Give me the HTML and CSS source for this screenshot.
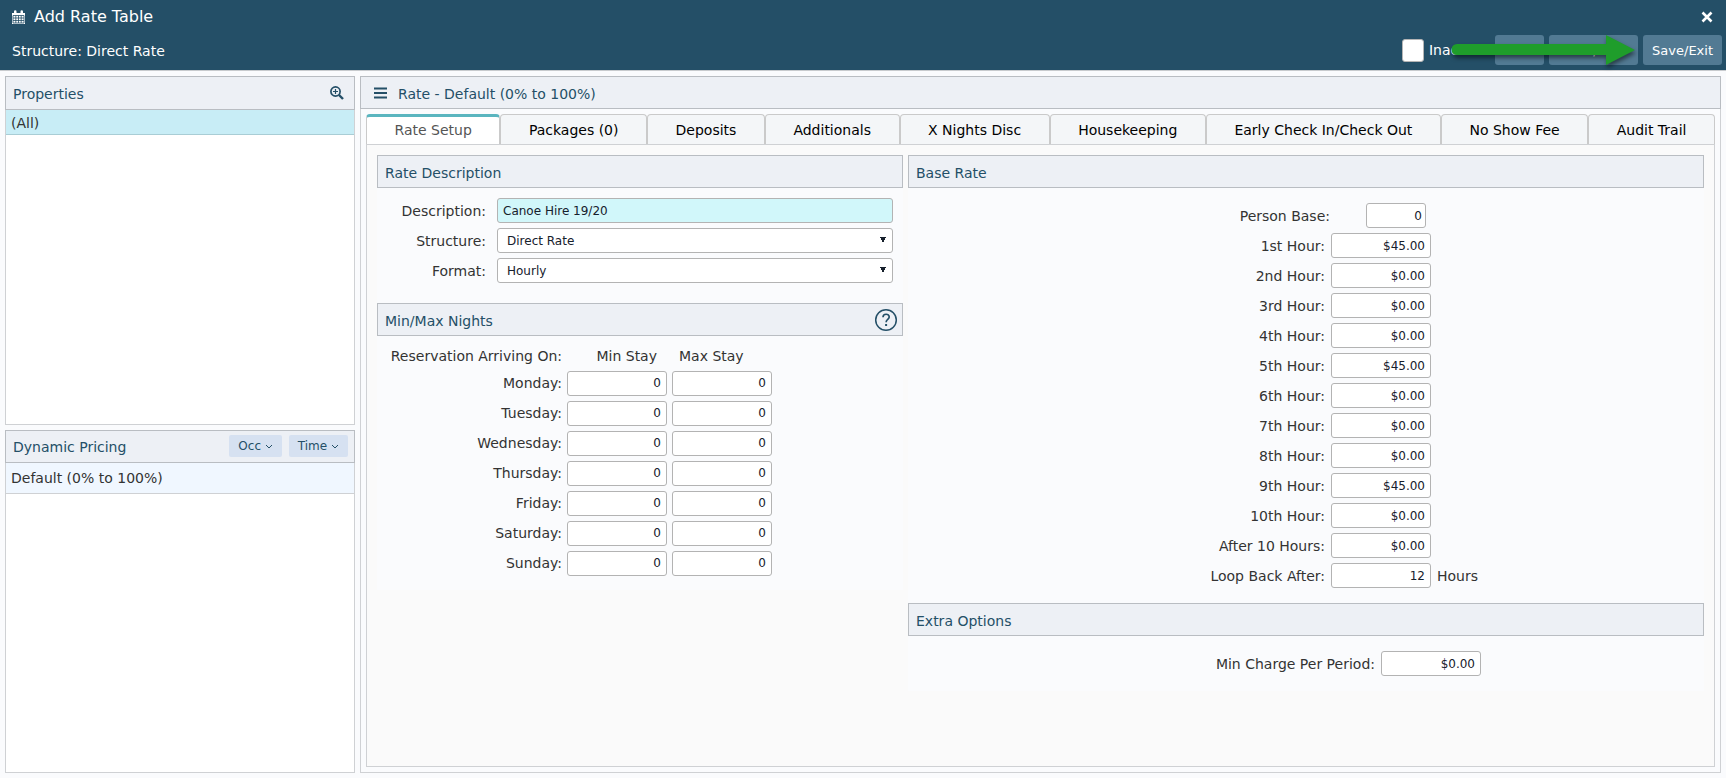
FILE: index.html
```
<!DOCTYPE html>
<html lang="en">
<head>
    <meta charset="UTF-8">
    <meta name="viewport" content="width=device-width, initial-scale=1.0">
    <title>Add Rate Table</title>
    <link rel="stylesheet" href="styles.css">
</head>
<body>

<!-- Top Bar -->
<header class="top-bar">
    <div class="title-row">
        <svg class="icon-calendar" viewBox="0 0 13 14">
            <path d="M0 3h2V1.500a1 1 0 0 1 2.500 0V3h4V1.500a1 1 0 0 1 2.500 0V3h2v11H0z" fill="#fff"/>
            <path d="M1 5.500h11v7.500H1zM1 8h11M1 10.500h11M3.800 5.500v7.500M6.500 5.500v7.500M9.200 5.500v7.500" fill="none" stroke="#244f67" stroke-width="0.800"/>
        </svg>
        <h1>Add Rate Table</h1>
        <button class="close-btn" aria-label="Close">
            <svg viewBox="0 0 12 12"><path d="M1.500 1.500l9 9M10.500 1.500l-9 9" stroke="#fff" stroke-width="2.600"/></svg>
        </button>
    </div>
    <div class="action-row">
        <span class="structure-text">Structure: Direct Rate</span>
        <div class="actions">
            <input type="checkbox" id="inactive" class="check">
            <label for="inactive">Inactive</label>
            <button class="top-btn btn-save">Save</button>
            <button class="top-btn btn-new">Save/New</button>
            <button class="top-btn">Save/Exit</button>
            <svg class="arrow" viewBox="0 0 190 40">
                <path d="M11 9h149V0l29 15-29 15V20H11a5.500 5.500 0 0 1 0-11z" fill="#1f9d2b"/>
            </svg>
        </div>
    </div>
</header>

<div class="layout">
    <!-- Left Side -->
    <aside class="side">
        <section class="panel properties">
            <div class="panel-header">
                <h2>Properties</h2>
                <button class="icon-btn" aria-label="Search">
                    <svg class="icon-search" viewBox="0 0 14 14" fill="none" stroke="#244f67">
                        <circle cx="5.500" cy="5.500" r="4.600" stroke-width="1.700"/>
                        <path d="M9 9l4 4" stroke-width="2.400"/>
                        <path d="M3 5.500h5M5.500 3v5" stroke-width="1.200"/>
                    </svg>
                </button>
            </div>
            <div class="list-row selected">(All)</div>
        </section>

        <section class="panel pricing">
            <div class="panel-header">
                <h2>Dynamic Pricing</h2>
                <button class="small-btn">Occ <svg viewBox="0 0 8 5"><path d="M1 1l3 3 3-3" fill="none" stroke="#244f67"/></svg></button>
                <button class="small-btn">Time <svg viewBox="0 0 8 5"><path d="M1 1l3 3 3-3" fill="none" stroke="#244f67"/></svg></button>
            </div>
            <div class="list-row current">Default (0% to 100%)</div>
        </section>
    </aside>

    <!-- Rate Panel -->
    <main class="panel rate-panel">
        <div class="panel-header rate-header">
            <svg class="icon-menu" viewBox="0 0 13 12"><path d="M0 1.500h13M0 6h13M0 10.500h13" stroke="#244f67" stroke-width="2"/></svg>
            <h2>Rate - Default (0% to 100%)</h2>
        </div>

        <div class="tab-box">
            <nav class="tabs">
                <button class="tab active">Rate Setup</button>
                <button class="tab">Packages (0)</button>
                <button class="tab">Deposits</button>
                <button class="tab">Additionals</button>
                <button class="tab">X Nights Disc</button>
                <button class="tab">Housekeeping</button>
                <button class="tab">Early Check In/Check Out</button>
                <button class="tab">No Show Fee</button>
                <button class="tab">Audit Trail</button>
            </nav>

            <div class="tab-content">
                <div class="col-left">
                    <section class="group">
                        <div class="group-header"><h3>Rate Description</h3></div>
                        <div class="form description-form">
                            <label for="description">Description:</label>
                            <input type="text" id="description" class="field highlight" value="Canoe Hire 19/20">
                            <label for="structure">Structure:</label>
                            <select id="structure" class="field"><option>Direct Rate</option></select>
                            <label for="format">Format:</label>
                            <select id="format" class="field"><option>Hourly</option></select>
                        </div>
                    </section>

                    <section class="group">
                        <div class="group-header">
                            <h3>Min/Max Nights</h3>
                            <button class="help-btn" aria-label="Help">
                                <svg viewBox="0 0 24 24" fill="none" stroke="#244f67">
                                    <circle cx="12" cy="12" r="10.300" stroke-width="1.500"/>
                                    <path d="M9 9.300c0-4 6.200-4 6.200-.3 0 2.500-3.100 2.300-3.100 5.200" stroke-width="1.700"/>
                                    <path d="M12.100 16v2" stroke-width="2"/>
                                </svg>
                            </button>
                        </div>
                        <table class="nights-table">
                            <thead>
                                <tr><th>Reservation Arriving On:</th><th class="min-head">Min Stay</th><th class="max-head">Max Stay</th></tr>
                            </thead>
                            <tbody>
                                <tr><th>Monday:</th><td><input type="text" class="field num" aria-label="Monday min stay" value="0"></td><td><input type="text" class="field num" aria-label="Monday max stay" value="0"></td></tr>
                                <tr><th>Tuesday:</th><td><input type="text" class="field num" aria-label="Tuesday min stay" value="0"></td><td><input type="text" class="field num" aria-label="Tuesday max stay" value="0"></td></tr>
                                <tr><th>Wednesday:</th><td><input type="text" class="field num" aria-label="Wednesday min stay" value="0"></td><td><input type="text" class="field num" aria-label="Wednesday max stay" value="0"></td></tr>
                                <tr><th>Thursday:</th><td><input type="text" class="field num" aria-label="Thursday min stay" value="0"></td><td><input type="text" class="field num" aria-label="Thursday max stay" value="0"></td></tr>
                                <tr><th>Friday:</th><td><input type="text" class="field num" aria-label="Friday min stay" value="0"></td><td><input type="text" class="field num" aria-label="Friday max stay" value="0"></td></tr>
                                <tr><th>Saturday:</th><td><input type="text" class="field num" aria-label="Saturday min stay" value="0"></td><td><input type="text" class="field num" aria-label="Saturday max stay" value="0"></td></tr>
                                <tr><th>Sunday:</th><td><input type="text" class="field num" aria-label="Sunday min stay" value="0"></td><td><input type="text" class="field num" aria-label="Sunday max stay" value="0"></td></tr>
                            </tbody>
                        </table>
                    </section>
                </div>

                <div class="col-right">
                    <section class="group">
                        <div class="group-header"><h3>Base Rate</h3></div>
                        <div class="form rate-form">
                            <div class="rate-row person-row"><label for="person">Person Base:</label><input type="text" id="person" class="field num" value="0"></div>
                            <div class="rate-row"><label for="h1">1st Hour:</label><input type="text" id="h1" class="field num" value="$45.00"></div>
                            <div class="rate-row"><label for="h2">2nd Hour:</label><input type="text" id="h2" class="field num" value="$0.00"></div>
                            <div class="rate-row"><label for="h3">3rd Hour:</label><input type="text" id="h3" class="field num" value="$0.00"></div>
                            <div class="rate-row"><label for="h4">4th Hour:</label><input type="text" id="h4" class="field num" value="$0.00"></div>
                            <div class="rate-row"><label for="h5">5th Hour:</label><input type="text" id="h5" class="field num" value="$45.00"></div>
                            <div class="rate-row"><label for="h6">6th Hour:</label><input type="text" id="h6" class="field num" value="$0.00"></div>
                            <div class="rate-row"><label for="h7">7th Hour:</label><input type="text" id="h7" class="field num" value="$0.00"></div>
                            <div class="rate-row"><label for="h8">8th Hour:</label><input type="text" id="h8" class="field num" value="$0.00"></div>
                            <div class="rate-row"><label for="h9">9th Hour:</label><input type="text" id="h9" class="field num" value="$45.00"></div>
                            <div class="rate-row"><label for="h10">10th Hour:</label><input type="text" id="h10" class="field num" value="$0.00"></div>
                            <div class="rate-row"><label for="after">After 10 Hours:</label><input type="text" id="after" class="field num" value="$0.00"></div>
                            <div class="rate-row"><label for="loop">Loop Back After:</label><input type="text" id="loop" class="field num" value="12"><span>Hours</span></div>
                        </div>
                    </section>

                    <section class="group">
                        <div class="group-header"><h3>Extra Options</h3></div>
                        <div class="form rate-form extra-form">
                            <div class="rate-row"><label for="charge">Min Charge Per Period:</label><input type="text" id="charge" class="field num" value="$0.00"></div>
                        </div>
                    </section>
                </div>
            </div>
        </div>
    </main>
</div>

</body>
</html>
```
FILE: styles.css
```
* {
    box-sizing: border-box;
}
body {
    margin: 0;
    min-height: 100vh;
    display: flex;
    flex-direction: column;
    background-color: #fafbfd;
    color: #333;
    font-family: Verdana, "DejaVu Sans", sans-serif;
    font-size: 14px;
    line-height: 18px;
}
h1, h2, h3 {
    margin: 0;
    font-weight: normal;
}
button, input, select {
    font-family: inherit;
    margin: 0;
}
button {
    cursor: pointer;
}

/* top bar */
.top-bar {
    background-color: #244f67;
    border-bottom: 1px solid #c8cbce;
    color: white;
    padding: 0 4px 5px 12px;
}
.title-row {
    display: flex;
    align-items: center;
    height: 33px;
    margin-bottom: 2px;
}
.icon-calendar {
    width: 13px;
    height: 14px;
    margin-right: 9px;
}
h1 {
    font-size: 16px;
    flex: 1;
}
.close-btn {
    background: none;
    border: none;
    padding: 0;
    margin-right: 9px;
    height: 12px;
}
.close-btn svg {
    width: 12px;
    height: 12px;
    display: block;
}
.action-row {
    display: flex;
    align-items: center;
    justify-content: space-between;
}
.structure-text {
    padding-top: 2px;
}
.actions {
    position: relative;
    display: flex;
    align-items: center;
    gap: 5px;
}
.check {
    appearance: none;
    width: 22px;
    height: 23px;
    background-color: white;
    border: 1px solid #b5b5b5;
    border-radius: 3px;
}
.top-btn {
    height: 30px;
    padding: 0 9px;
    background-color: #527a93;
    color: white;
    border: none;
    border-radius: 3px;
    font-size: 13px;
}
.btn-save {
    margin-left: 5px;
}
.btn-new {
    padding: 0 12px;
}
.arrow {
    position: absolute;
    top: 0;
    right: 86px;
    width: 190px;
    height: 40px;
    filter: drop-shadow(1px 3px 2px rgba(0, 0, 0, 0.5));
}

/* panels */
.layout {
    flex: 1;
    display: flex;
    gap: 5px;
    padding: 5px;
}
.side {
    width: 350px;
    display: flex;
    flex-direction: column;
    gap: 5px;
}
.panel {
    border: 1px solid #cfd1d4;
    background-color: white;
}
.properties {
    flex: 349;
}
.pricing {
    flex: 343;
}
.panel-header,
.group-header {
    display: flex;
    align-items: center;
    height: 33px;
    padding: 0 7px;
    background-color: #edf0f5;
    border: 1px solid #b9bdc2;
    color: #244f67;
}
.panel-header {
    margin: -1px -1px 0;
}
.properties .panel-header {
    height: 34px;
}
h2, h3 {
    font-size: 14px;
    flex: 1;
    padding-top: 2px;
}
.icon-btn,
.help-btn {
    background: none;
    border: none;
    padding: 0;
}
.icon-btn svg {
    display: block;
    width: 14px;
    height: 14px;
    margin-right: 3px;
}
.help-btn svg {
    display: block;
    width: 24px;
    height: 24px;
}
.group-header {
    padding-right: 4px;
}
.list-row {
    height: 25px;
    padding: 4px 5px;
    border-bottom: 1px solid #cfd1d4;
}
.selected {
    background-color: #c8edf6;
    border-color: #a9cdd5;
}
.current {
    height: 31px;
    padding-top: 6px;
    background-color: #f0f7ff;
}
.small-btn {
    height: 22px;
    margin-left: 7px;
    padding: 0 9px;
    background-color: #d6e1f1;
    border: none;
    border-radius: 2px;
    color: #244f67;
    font-size: 12px;
}
.small-btn svg {
    width: 8px;
    height: 5px;
    vertical-align: 1px;
}
.pricing .panel-header {
    padding-right: 6px;
}

/* tabs */
.rate-panel {
    flex: 1;
    display: flex;
    flex-direction: column;
    background-color: #fafbfd;
}
.rate-header {
    padding-left: 13px;
}
.icon-menu {
    width: 13px;
    height: 12px;
    margin-right: 11px;
}
.tab-box {
    flex: 1;
    display: flex;
    flex-direction: column;
    margin: 5px;
}
.tabs {
    display: flex;
}
.tab {
    flex: 1 1 auto;
    height: 30px;
    padding: 0;
    background-color: #f4f6f8;
    border: 1px solid #cacaca;
    border-bottom: none;
    border-radius: 4px 4px 0 0;
    color: black;
    font-size: 14px;
}
.tab.active {
    padding-bottom: 2px;
    background-color: white;
    border-top: 3px solid #5ab5bf;
    color: #555;
}
.tab-content {
    flex: 1;
    display: flex;
    align-items: flex-start;
    gap: 5px;
    padding: 10px;
    background-color: #fafafa;
    border: 1px solid #cfd1d4;
}
.col-left {
    width: 526px;
}
.col-right {
    flex: 1;
}
.group {
    background-color: #fafbfd;
}

/* form fields */
.field {
    width: 100%;
    height: 25px;
    padding: 0 5px;
    background-color: white;
    border: 1px solid #b3b3b3;
    border-radius: 3px;
    color: #16202c;
    font-size: 12px;
}
select.field {
    appearance: none;
    padding-left: 9px;
    background-image: linear-gradient(to bottom right, #16202c 50%, transparent 50%), linear-gradient(to bottom left, #16202c 50%, transparent 50%);
    background-size: 3px 6px;
    background-position: right 6px top 8px, right 9px top 8px;
    background-repeat: no-repeat;
}
.highlight {
    background-color: #d1f7fa;
}
.num {
    text-align: right;
}
.description-form {
    display: grid;
    grid-template-columns: 109px 1fr;
    gap: 5px 11px;
    align-items: center;
    padding: 10px 10px 20px 0;
}
.description-form label {
    text-align: right;
}
.nights-table {
    border-spacing: 0;
    margin-top: 7px;
    padding-bottom: 12px;
}
.nights-table th {
    height: 25px;
    padding: 0;
    font-weight: normal;
    text-align: right;
}
.nights-table th:first-child {
    width: 185px;
}
.nights-table .min-head {
    padding-right: 10px;
}
.nights-table .max-head {
    text-align: left;
    padding-left: 12px;
}
.nights-table td {
    width: 105px;
    height: 30px;
    padding: 0 0 0 5px;
}
.rate-form {
    padding: 15px 0 10px;
}
.rate-row {
    display: flex;
    align-items: center;
    gap: 6px;
    margin-bottom: 5px;
}
.rate-row label {
    width: 417px;
    text-align: right;
}
.rate-row .field {
    width: 100px;
}
.rate-row.person-row label {
    width: 422px;
    margin-right: 30px;
}
.rate-row.person-row .field {
    width: 60px;
    padding-right: 3px;
}
.extra-form .rate-row label {
    width: 467px;
}
```
